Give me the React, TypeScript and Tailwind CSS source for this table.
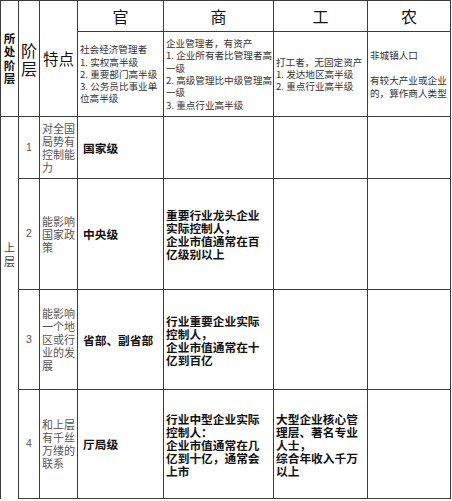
import React from "react";

const cjk = { fontFamily: '"Noto Sans CJK SC", "Liberation Sans", sans-serif' };

const line = "border-r border-b border-[#3c3c3c]";

function Lines({ items }: { items: string[] }) {
  return (
    <>
      {items.map((t, i) => (
        <div key={i} className="whitespace-nowrap">
          {t === "" ? "\u00a0" : t}
        </div>
      ))}
    </>
  );
}

const rows = [
  {
    n: "1",
    trait: ["对全国", "局势有", "控制能", "力"],
    guan: "国家级",
    shang: [] as string[],
    gong: [] as string[],
  },
  {
    n: "2",
    trait: ["能影响", "国家政", "策"],
    guan: "中央级",
    shang: ["重要行业龙头企业", "实际控制人，", "企业市值通常在百", "亿级别以上"],
    gong: [],
  },
  {
    n: "3",
    trait: ["能影响", "一个地", "区或行", "业的发", "展"],
    guan: "省部、副省部",
    shang: ["行业重要企业实际", "控制人，", "企业市值通常在十", "亿到百亿"],
    gong: [],
  },
  {
    n: "4",
    trait: ["和上层", "有千丝", "万缕的", "联系"],
    guan: "厅局级",
    shang: ["行业中型企业实际", "控制人：", "企业市值通常在几", "亿到十亿，通常会", "上市"],
    gong: ["大型企业核心管", "理层、著名专业", "人士，", "综合年收入千万", "以上"],
  },
];

export default function App() {
  return (
    <div className="w-[452px] h-[501px] bg-white overflow-hidden" style={cjk}>
      <div className="grid w-[451px] grid-cols-[18px_21px_38px_86px_110px_94px_83px] grid-rows-[31px_85px_62px_111px_100px_109px] border-l border-t border-[#3c3c3c]">
        {/* header */}
        <div className={`${line} row-span-2 flex flex-col items-center justify-center text-[11.5px] leading-[13.3px] font-bold text-[#111]`}>
          <div>所</div>
          <div>处</div>
          <div>阶</div>
          <div>层</div>
        </div>
        <div className={`${line} row-span-2 flex flex-col items-center justify-center text-[16px] leading-[18px] text-[#111]`}>
          <div>阶</div>
          <div>层</div>
        </div>
        <div className={`${line} row-span-2 flex items-center justify-center text-[15.5px] text-[#111] whitespace-nowrap`}>
          特点
        </div>
        <div className={`${line} flex items-center justify-center text-[16px] text-[#111]`}>官</div>
        <div className={`${line} flex items-center justify-center text-[16px] text-[#111]`}>商</div>
        <div className={`${line} flex items-center justify-center text-[16px] text-[#111]`}>工</div>
        <div className={`${line} flex items-center justify-center text-[16px] text-[#111]`}>农</div>

        <div className={`${line} flex flex-col justify-center pl-[2px] text-[9.6px] leading-[12.2px] text-[#333]`}>
          <Lines items={["社会经济管理者", "1. 实权高半级", "2. 重要部门高半级", "3. 公务员比事业单", "位高半级"]} />
        </div>
        <div className={`${line} flex flex-col justify-center pl-[2px] text-[9.6px] leading-[12.3px] text-[#333]`}>
          <Lines
            items={[
              "企业管理者，有资产",
              "1. 企业所有者比管理者高",
              "一级",
              "2. 高级管理比中级管理高",
              "一级",
              "3. 重点行业高半级",
            ]}
          />
        </div>
        <div className={`${line} flex flex-col justify-center pl-[2px] text-[9.6px] leading-[12.3px] text-[#333]`}>
          <Lines items={["打工者，无固定资产", "1. 发达地区高半级", "2. 重点行业高半级"]} />
        </div>
        <div className={`${line} flex flex-col justify-center pl-[2px] text-[9.6px] leading-[12.5px] text-[#333]`}>
          <Lines items={["非城镇人口", "", "有较大产业或企业", "的，算作商人类型"]} />
        </div>

        {/* body */}
        <div className="row-span-4 border-r border-[#3c3c3c] flex flex-col items-center pt-[123px] text-[11px] leading-[14px] text-[#444]">
          <div>上</div>
          <div>层</div>
        </div>
        {rows.map((r) => (
          <React.Fragment key={r.n}>
            <div
              className={`${line} flex items-center justify-center text-[10.5px] text-[#555]`}
              style={{ fontFamily: '"Liberation Sans", sans-serif' }}
            >
              {r.n}
            </div>
            <div className={`${line} flex flex-col justify-center pl-[2px] text-[11px] leading-[13px] text-[#555]`}>
              <Lines items={r.trait} />
            </div>
            <div className={`${line} flex items-center pl-[5px] text-[11.7px] font-bold text-[#111] whitespace-nowrap`}>
              {r.guan}
            </div>
            <div className={`${line} flex flex-col justify-center pl-[2px] text-[11.7px] leading-[13px] font-bold text-[#111]`}>
              <Lines items={r.shang} />
            </div>
            <div className={`${line} flex flex-col justify-center pl-[2px] text-[11.7px] leading-[13px] font-bold text-[#111]`}>
              <Lines items={r.gong} />
            </div>
            <div className={line}></div>
          </React.Fragment>
        ))}
      </div>
    </div>
  );
}
